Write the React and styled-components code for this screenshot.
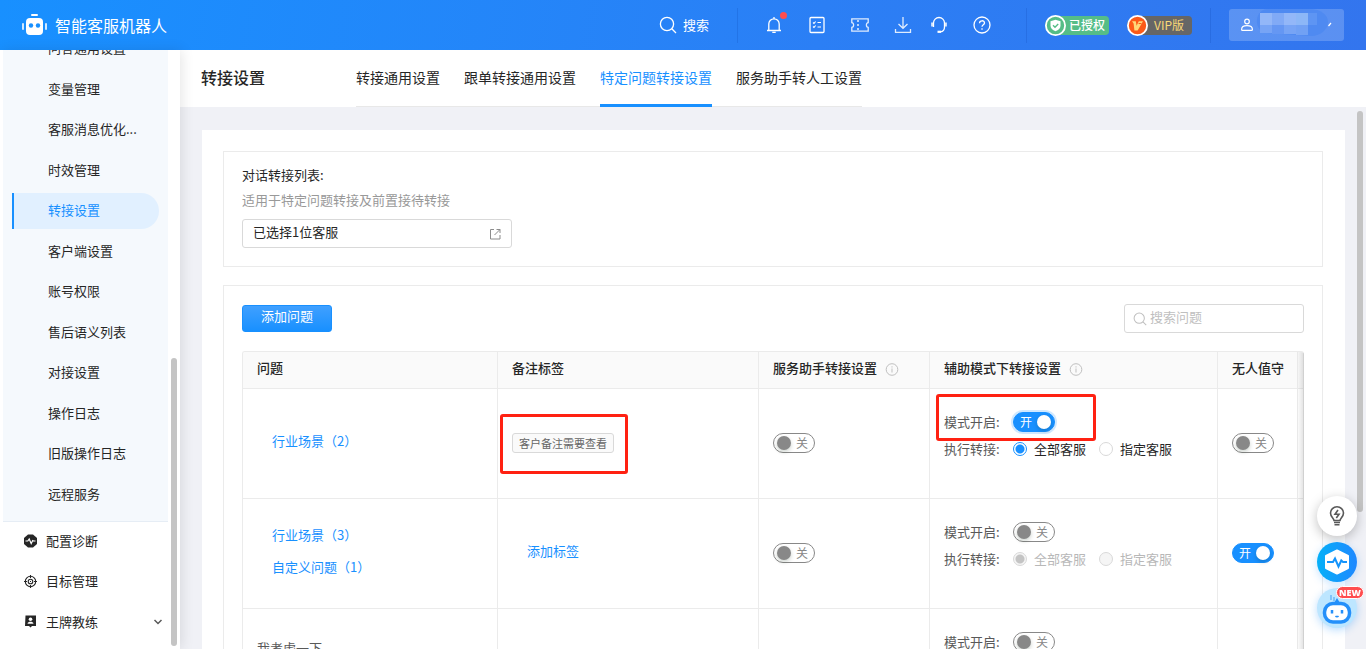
import React, { useState } from 'react';
import styled, { createGlobalStyle, css } from 'styled-components';

const GlobalStyle = createGlobalStyle`
    * {
        box-sizing: border-box;
    }
    body {
        margin: 0;
        font-family: "Noto Sans CJK SC", "Liberation Sans", sans-serif;
        font-size: 13px;
        line-height: 20px;
        color: #262626;
        overflow: hidden;
    }
    button, input {
        font: inherit;
    }
    a {
        color: #1890ff;
        text-decoration: none;
    }
`;

const Page = styled.div`
    display: flex;
    flex-direction: column;
    height: 100vh;
`;

/* Barra superior */
const Header = styled.header`
    display: flex;
    align-items: center;
    flex: none;
    height: 50px;
    padding: 0 22px;
    color: #fff;
    background: linear-gradient(100deg, #1890ff 0%, #2b7ff5 60%, #3375ee 100%);
`;

const Brand = styled.div`
    display: flex;
    align-items: center;
    gap: 8px;
    margin-right: auto;
    font-size: 16px;
`;

const SearchButton = styled.button`
    display: flex;
    align-items: center;
    gap: 6px;
    padding: 0;
    border: 0;
    color: #fff;
    background: none;
    cursor: pointer;
`;

const Divider = styled.span`
    width: 1px;
    height: 35px;
    margin: 0 ${(props) => props.$right}px 0 ${(props) => props.$left}px;
    background: rgba(0, 50, 150, 0.15);
`;

const IconGroup = styled.div`
    display: flex;
    align-items: center;
    gap: ${(props) => (props.$tight ? 18 : 25)}px;
`;

const IconButton = styled.button`
    position: relative;
    display: flex;
    padding: 0;
    border: 0;
    color: #fff;
    background: none;
    cursor: pointer;
`;

const Dot = styled.span`
    position: absolute;
    top: -4px;
    right: -4px;
    width: 7px;
    height: 7px;
    border-radius: 50%;
    background: #ff4d4f;
`;

const Badge = styled.span`
    display: flex;
    align-items: center;
    gap: ${(props) => (props.$vip ? 6 : 3)}px;
    height: 19px;
    margin-right: 18px;
    padding-right: ${(props) => (props.$vip ? 8 : 4)}px;
    border-radius: 10px 4px 4px 10px;
    font-size: 12px;
    font-weight: ${(props) => (props.$vip ? 400 : 500)};
    color: ${(props) => (props.$vip ? '#f9d877' : '#fff')};
    background: ${(props) => (props.$vip ? '#666' : '#55bd87')};
    svg {
        flex: none;
    }
`;

const UserButton = styled.button`
    display: flex;
    align-items: center;
    width: 115px;
    height: 32px;
    padding: 0;
    border: 0;
    border-radius: 3px;
    background: rgba(255, 255, 255, 0.2);
    cursor: pointer;
`;

const Body = styled.div`
    display: flex;
    flex: 1;
    min-height: 0;
`;

/* Menu lateral, rolado até o fim */
const Sidebar = styled.nav`
    position: relative;
    display: flex;
    flex-direction: column;
    justify-content: flex-end;
    flex: none;
    width: 180px;
    padding: 0 12px 6px 3px;
    background: #fff;
    box-shadow: 2px 0 12px rgba(0, 0, 0, 0.1);
    overflow: hidden;
    z-index: 1;
`;

const SubMenu = styled.ul`
    display: grid;
    grid-auto-rows: 1fr;
    align-items: center;
    flex: none;
    height: 493px;
    margin: 0;
    padding: 0 9px 6px;
    list-style: none;
    border-bottom: 1px solid #e6edf5;
    background: #f5f9fd;
`;

const SubLink = styled.a`
    display: block;
    height: 36px;
    padding-left: 34px;
    line-height: 34px;
    color: #262626;
    border-left: 2px solid transparent;
    border-radius: 0 18px 18px 0;
    ${(props) =>
        props.$active &&
        css`
            color: #1890ff;
            border-color: #1890ff;
            background: #e1f0ff;
        `}
`;

const MainMenu = styled.ul`
    display: grid;
    grid-auto-rows: 1fr;
    flex: none;
    height: 121px;
    margin: 0;
    padding: 0;
    list-style: none;
`;

const MainLink = styled.a`
    display: flex;
    align-items: center;
    gap: 9px;
    height: 38px;
    padding: 0 5px 0 21px;
    color: #262626;
    svg:last-child:not(:first-child) {
        margin-left: auto;
        color: #595959;
    }
`;

const ScrollThumb = styled.span`
    position: absolute;
    ${(props) => (props.$bottom ? 'bottom: 3px;' : 'top: 4px;')}
    right: 3px;
    width: 6px;
    height: ${(props) => props.$size}%;
    border-radius: 3px;
    background: #c4c4c4;
`;

/* Área principal */
const Main = styled.main`
    display: flex;
    flex-direction: column;
    flex: 1;
    min-width: 0;
    background: #f0f1f6;
`;

const TitleBar = styled.div`
    display: flex;
    flex: none;
    height: 57px;
    padding-left: 21px;
    background: #fff;
`;

const PageTitle = styled.h1`
    width: 155px;
    margin: 0;
    font-size: 16px;
    font-weight: 500;
    line-height: 54px;
`;

const Tabs = styled.div`
    display: flex;
    gap: 24px;
    border-bottom: 1px solid #e8e8e8;
`;

const Tab = styled.a`
    margin-bottom: -1px;
    font-size: 14px;
    line-height: 54px;
    color: ${(props) => (props.$active ? '#1890ff' : '#262626')};
    border-bottom: 3px solid ${(props) => (props.$active ? '#1890ff' : 'transparent')};
`;

const Scroller = styled.div`
    position: relative;
    flex: 1;
    min-height: 0;
    padding: 23px 21px 0 22px;
    overflow: hidden;
`;

const Card = styled.div`
    display: flex;
    flex-direction: column;
    gap: 18px;
    padding: 21px 22px 21px 21px;
    background: #fff;
`;

const Panel = styled.section`
    padding: ${(props) => (props.$compact ? 13 : 18)}px 18px 18px;
    border: 1px solid #ebebeb;
`;

const Hint = styled.p`
    margin: 5px 0 9px;
    color: #999;
`;

const PickerButton = styled.button`
    display: flex;
    align-items: center;
    justify-content: space-between;
    width: 270px;
    height: 29px;
    padding: 0 10px 4px;
    border: 1px solid #d9d9d9;
    border-radius: 3px;
    color: #262626;
    background: #fff;
    cursor: pointer;
    svg {
        margin-top: 4px;
    }
`;

const Toolbar = styled.div`
    display: flex;
    align-items: center;
    justify-content: space-between;
    margin-bottom: 18px;
`;

const PrimaryButton = styled.button`
    width: 90px;
    height: 27px;
    padding: 0 0 5px;
    border: 1px solid #1890ff;
    border-radius: 3px;
    color: #fff;
    background: linear-gradient(#40a0ff, #1890ff);
    cursor: pointer;
`;

const SearchBox = styled.label`
    display: flex;
    align-items: center;
    gap: 3px;
    width: 180px;
    height: 29px;
    padding: 0 8px;
    border: 1px solid #d9d9d9;
    border-radius: 3px;
    color: #bfbfbf;
    svg {
        flex: none;
    }
`;

const SearchInput = styled.input`
    width: 100%;
    height: 26px;
    padding: 0 0 5px;
    border: 0;
    outline: 0;
    background: none;
    &::placeholder {
        color: #bfbfbf;
    }
`;

/* Tabela de perguntas */
const TableWrap = styled.div`
    position: relative;
    border: solid #ebebeb;
    border-width: 1px 0 0 1px;
    border-radius: 3px 3px 0 0;
    overflow: hidden;
    &::after {
        content: "";
        position: absolute;
        inset: 0 0 0 auto;
        width: 7px;
        background: linear-gradient(90deg, transparent, rgba(0, 0, 0, 0.12));
    }
`;

const Table = styled.table`
    width: 100%;
    table-layout: fixed;
    border-spacing: 0;
`;

const Col = styled.col`
    width: ${(props) => (props.$width ? `${props.$width}px` : 'auto')};
`;

const Th = styled.th`
    height: 37px;
    padding: 0 14px 4px;
    font-weight: 500;
    text-align: left;
    white-space: nowrap;
    border: solid #ebebeb;
    border-width: 0 1px 1px 0;
    background: #fafafa;
    &:last-child {
        padding: 0;
    }
    svg {
        margin: 0 0 -3px 5px;
    }
`;

const Td = styled.td`
    height: 110px;
    padding: 0 14px ${(props) => props.$lift || 2}px;
    border: solid #ebebeb;
    border-width: 0 1px 1px 0;
    &:last-child {
        padding: 0;
    }
`;

const QuestionLinks = styled.div`
    display: flex;
    flex-direction: column;
    gap: 12px;
    padding-left: 15px;
`;

const PlainQuestion = styled.div`
    height: 46px;
    color: #595959;
`;

const Tag = styled.span`
    display: inline-block;
    height: 20px;
    padding: 0 6px;
    font-size: 11px;
    line-height: 18px;
    color: #666;
    border: 1px solid #d9d9d9;
    border-radius: 3px;
    background: #fafafa;
`;

/* Marca vermelha desenhada por cima do conteúdo */
const Marked = styled.div`
    position: relative;
    display: flex;
    width: max-content;
    &::after {
        content: "";
        position: absolute;
        inset: ${(props) => props.$inset};
        border: 3px solid #ff2112;
        border-radius: 3px;
        pointer-events: none;
    }
`;

const ModeRow = styled.div`
    display: flex;
    align-items: center;
    height: 27px;
`;

const ModeLabel = styled.span`
    width: 69px;
    color: #595959;
`;

const RadioLabel = styled.label`
    display: flex;
    align-items: center;
    gap: 7px;
    margin-right: 13px;
    white-space: nowrap;
    color: ${(props) => (props.$disabled ? '#b8b8b8' : '#262626')};
`;

const Radio = styled.input.attrs({ type: 'radio' })`
    appearance: none;
    flex: none;
    width: 14px;
    height: 14px;
    margin: 0;
    border: 1px solid #d9d9d9;
    border-radius: 50%;
    background: #fff;
    &:checked {
        border-color: #1890ff;
        background: radial-gradient(circle, #1890ff 4px, #fff 5px);
    }
    &:disabled {
        border-color: #d9d9d9;
        background: #f5f5f5;
    }
    &:disabled:checked {
        background: radial-gradient(circle, #c4c4c4 4px, #f5f5f5 5px);
    }
`;

const SwitchTrack = styled.label`
    display: inline-flex;
    align-items: center;
    justify-content: space-between;
    flex-direction: ${(props) => (props.$on ? 'row-reverse' : 'row')};
    width: 42px;
    height: 20px;
    padding: ${(props) => (props.$on ? '0 3px 0 6px' : '0 6px 0 3px')};
    border: 1px solid ${(props) => (props.$on ? '#1890ff' : '#888')};
    border-radius: 10px;
    font-size: 12px;
    line-height: 16px;
    vertical-align: middle;
    color: ${(props) => (props.$on ? '#fff' : '#888')};
    background: ${(props) => (props.$on ? '#1890ff' : '#fff')};
    box-shadow: ${(props) => (props.$focused ? '0 0 0 2px rgba(24, 144, 255, 0.2)' : 'none')};
    cursor: pointer;
`;

const SwitchKnob = styled.input.attrs({ type: 'checkbox', role: 'switch' })`
    appearance: none;
    width: 14px;
    height: 14px;
    margin: 0;
    border-radius: 50%;
    background: #888;
    box-shadow: 0 2px 4px rgba(0, 35, 11, 0.2);
    &:checked {
        background: #fff;
    }
`;

/* Botões flutuantes */
const FloatBar = styled.aside`
    position: fixed;
    right: 9px;
    bottom: 21px;
    display: flex;
    flex-direction: column;
    align-items: center;
    gap: 6px;
    z-index: 2;
`;

const FloatButton = styled.button`
    position: relative;
    display: flex;
    align-items: center;
    justify-content: center;
    width: 40px;
    height: 40px;
    padding: 0;
    border: 0;
    border-radius: 50%;
    background: ${(props) => props.$bg};
    box-shadow: ${(props) => props.$shadow};
    cursor: pointer;
`;

const NewBadge = styled.span`
    position: absolute;
    top: -2px;
    right: -7px;
    width: 28px;
    height: 13px;
    border: 1px solid #fff;
    border-radius: 7px;
    font-family: "Open Sans", sans-serif;
    font-size: 9px;
    font-weight: 800;
    line-height: 11px;
    text-align: center;
    color: #fff;
    background: #ff4d4f;
`;

const Icon = ({ size = 18, children, box = 18, width = 1.3 }) => (
    <svg
        width={size}
        height={size}
        viewBox={`0 0 ${box} ${box}`}
        fill="none"
        stroke="currentColor"
        strokeWidth={width}
        aria-hidden="true"
    >
        {children}
    </svg>
);

const LogoIcon = () => (
    <svg width="25" height="22" viewBox="0 0 25 22" fill="#fff" aria-hidden="true">
        <rect x="9" y="0" width="7" height="2" rx="1" />
        <rect x="4" y="4" width="17" height="17" rx="4" />
        <rect x="0" y="9" width="2" height="7" rx="1" opacity="0.8" />
        <rect x="23" y="9" width="2" height="7" rx="1" opacity="0.8" />
        <circle cx="9" cy="11.5" r="2.2" fill="#1890ff" />
        <circle cx="16" cy="11.5" r="2.2" fill="#1890ff" />
    </svg>
);

const SearchIcon = ({ size }) => (
    <Icon size={size}>
        <circle cx="8" cy="8" r="6.6" />
        <path d="M12.8 12.8L17 17" />
    </Icon>
);

const InfoIcon = () => (
    <svg width="20" height="13" viewBox="0 0 20 13" fill="none" stroke="#bfbfbf" aria-hidden="true">
        <circle cx="10" cy="6.5" r="5.8" />
        <path d="M10 5.5v4M10 3.3v1.2" />
    </svg>
);

const ShieldIcon = () => (
    <svg width="21" height="21" viewBox="0 0 21 21" aria-hidden="true">
        <circle cx="10.5" cy="10.5" r="9.6" fill="#55bd87" stroke="#fff" strokeWidth="1.8" />
        <path d="M10.5 4.8l5 1.4v4.6c0 2.5-2 4.2-5 5.4-3-1.2-5-2.9-5-5.4V6.2z" fill="#fff" />
        <path d="M8 10.3l2 1.9 3.2-3.2" fill="none" stroke="#55bd87" strokeWidth="1.4" />
    </svg>
);

const VipIcon = () => (
    <svg width="21" height="21" viewBox="0 0 21 21" aria-hidden="true">
        <circle cx="10.5" cy="10.5" r="9.6" fill="#fd5a18" stroke="#fff" strokeWidth="1.8" />
        <path d="M5 6.2h3.8l.8 4.6 2.2-4.6H16l-5.4 9.3H7.4L6.6 8.600z" fill="#ffd778" />
        <path d="M11.600 8.500h2.800" stroke="#fd5a18" />
    </svg>
);

/* Nome do usuário oculto por um mosaico */
const UserMask = () => (
    <svg width="115" height="32" viewBox="0 0 115 32" fill="none" aria-hidden="true">
        <path d="M38 0h42c12 0 19 6 19 13s-7 14-17 14l-44-3c-13-1-14-22 0-24z" fill="#4f8af1" />
        <path d="M31 4h12v12H31zM55 4h12v12H55z" fill="#93b7f8" />
        <path d="M43 4h12v12H43z" fill="#81aaf6" />
        <path d="M67 4h12v12H67z" fill="#8cb7f7" />
        <path d="M79 4h9v12h-9z" fill="#5e95f3" />
        <path d="M31 16h12v8H31zM55 16h12v9H55z" fill="#77a4f5" />
        <path d="M43 16h12v9H43z" fill="#6597f3" />
        <path d="M67 16h12v10H67z" fill="#71a1f4" />
        <g stroke="#fff" strokeWidth="1.2">
            <circle cx="18" cy="12.5" r="2.3" />
            <path d="M12.6 20.400c0-2.500 2-3.800 5.400-3.800s5.400 1.300 5.400 3.800c0 .6-.3.900-.9.900h-9c-.6 0-.9-.3-.9-.9z" />
            <path d="M99.500 17l2.500-3" />
        </g>
    </svg>
);

const DiagnoseIcon = () => (
    <svg width="13" height="14" viewBox="0 0 13 14" aria-hidden="true">
        <path d="M4 .5h5L13 4v6l-4 3.500H4L0 10V4z" fill="#262626" />
        <path d="M1.500 7h2.300l1.400-2 2 4.500 1.500-3L9.500 7h2" fill="none" stroke="#fff" strokeWidth="1.2" />
    </svg>
);

const TargetIcon = () => (
    <Icon size={13} box={13} width={1.1}>
        <circle cx="6.5" cy="6.5" r="5.2" />
        <circle cx="6.5" cy="6.5" r="2.3" />
        <path d="M6.5 0v3M6.5 10v3M0 6.5h3M10 6.5h3M6 6.5h1" />
    </Icon>
);

const CoachIcon = () => (
    <svg width="13" height="13" viewBox="0 0 13 13" aria-hidden="true">
        <path d="M1.5.5h10.500v10.500H8l-1.500 1.600L5 11H1z" fill="#262626" />
        <circle cx="6.5" cy="4.2" r="1.8" fill="#fff" />
        <path d="M3.500 8.800c.2-1.400 1.500-2 3-2s2.800.6 3 2z" fill="#fff" />
    </svg>
);

const subMenu = [
    '问答通用设置',
    '变量管理',
    '客服消息优化...',
    '时效管理',
    '转接设置',
    '客户端设置',
    '账号权限',
    '售后语义列表',
    '对接设置',
    '操作日志',
    '旧版操作日志',
    '远程服务',
];

const tabs = ['转接通用设置', '跟单转接通用设置', '特定问题转接设置', '服务助手转人工设置'];

const rows = [
    { id: 1, links: ['行业场景（2）'], tag: '客户备注需要查看', mode: true, unattended: false, marked: true },
    { id: 2, links: ['行业场景（3）', '自定义问题（1）'], addTag: true, mode: false, unattended: true },
    { id: 3, text: '我考虑一下', mode: false, unattended: false },
];

const Switch = ({ defaultOn, focused, label }) => {
    const [on, setOn] = useState(defaultOn);
    return (
        <SwitchTrack $on={on} $focused={focused}>
            <SwitchKnob checked={on} onChange={() => setOn(!on)} aria-label={label} />
            <span>{on ? '开' : '关'}</span>
        </SwitchTrack>
    );
};

const ModeSettings = ({ row }) => {
    const modeRow = (
        <ModeRow>
            <ModeLabel>模式开启:</ModeLabel>
            <Switch defaultOn={row.mode} focused={row.marked} label="模式开启" />
        </ModeRow>
    );
    return (
        <>
            {row.marked ? <Marked $inset="-15px -41px -5px -8px">{modeRow}</Marked> : modeRow}
            <ModeRow>
                <ModeLabel>执行转接:</ModeLabel>
                <RadioLabel $disabled={!row.mode}>
                    <Radio name={`target-${row.id}`} defaultChecked disabled={!row.mode} />
                    全部客服
                </RadioLabel>
                <RadioLabel $disabled={!row.mode}>
                    <Radio name={`target-${row.id}`} disabled={!row.mode} />
                    指定客服
                </RadioLabel>
            </ModeRow>
        </>
    );
};

const TopBar = () => (
    <Header>
        <Brand>
            <LogoIcon />
            智能客服机器人
        </Brand>
        <SearchButton>
            <SearchIcon size={18} />
            搜索
        </SearchButton>
        <Divider $left={28} $right={27} />
        <IconGroup>
            <IconButton aria-label="通知">
                <Icon>
                    <path d="M2 14.500h14M3.800 14.300V8a5.200 5.200 0 0 1 10.400 0v6.300M9 1v2M7.300 16.300h3.400" />
                </Icon>
                <Dot />
            </IconButton>
            <IconButton aria-label="任务">
                <Icon>
                    <rect x="2" y="1.5" width="14" height="15" rx="1" />
                    <path d="M5 6.500l1 1 1.600-2M5 10.500l1 1 1.600-2M9.500 6.500H13M9.500 11H13" strokeWidth="1.1" />
                </Icon>
            </IconButton>
            <IconButton aria-label="卡券">
                <Icon>
                    <path d="M.8 2.800h16.400v3.800c-1.200 0-1.800 1-1.800 2.400s.6 2.400 1.800 2.400v3.800H.8v-3.800c1.200 0 1.800-1 1.800-2.400S2 6.600.8 6.600z" opacity="0.85" />
                    <path d="M7 4v10" strokeDasharray="2 2" />
                </Icon>
            </IconButton>
            <IconGroup $tight>
                <IconButton aria-label="下载">
                    <Icon>
                        <path d="M9 1v11M4.500 8L9 12.300 13.500 8M1.500 13v3.300h15V13" opacity="0.85" />
                    </Icon>
                </IconButton>
                <IconButton aria-label="客服">
                    <Icon>
                        <path d="M3.500 11V7a5.500 5.500 0 0 1 11 0v4c0 2.800-1.500 4.500-4 4.800" />
                        <path d="M2.300 6.500v4M15.700 6.500v4" strokeWidth="2.4" opacity="0.8" />
                        <path d="M7.500 15.800h3.500" strokeWidth="2.2" />
                    </Icon>
                </IconButton>
            </IconGroup>
            <IconButton aria-label="帮助">
                <Icon>
                    <circle cx="9" cy="9" r="8" />
                    <path d="M6.500 7.200C6.500 4 11.500 4 11.500 7c0 1.700-2.500 1.900-2.500 3.800M9 12.200v1.500" />
                </Icon>
            </IconButton>
        </IconGroup>
        <Divider $left={35} $right={18} />
        <Badge>
            <ShieldIcon />
            已授权
        </Badge>
        <Badge $vip>
            <VipIcon />
            VIP版
        </Badge>
        <Divider $left={0} $right={18} />
        <UserButton aria-label="账号">
            <UserMask />
        </UserButton>
    </Header>
);

const SideMenu = () => (
    <Sidebar>
        <SubMenu>
            {subMenu.map((item) => (
                <li key={item}>
                    <SubLink href="#" $active={item === '转接设置'}>
                        {item}
                    </SubLink>
                </li>
            ))}
        </SubMenu>
        <MainMenu>
            <li>
                <MainLink href="#">
                    <DiagnoseIcon />
                    配置诊断
                </MainLink>
            </li>
            <li>
                <MainLink href="#">
                    <TargetIcon />
                    目标管理
                </MainLink>
            </li>
            <li>
                <MainLink href="#">
                    <CoachIcon />
                    王牌教练
                    <Icon size={10} box={10} width={1.5}>
                        <path d="M1.500 3L5 6.500 8.500 3" />
                    </Icon>
                </MainLink>
            </li>
        </MainMenu>
        <ScrollThumb $bottom $size={48} />
    </Sidebar>
);

const QuestionTable = () => (
    <TableWrap>
        <Table>
            <colgroup>
                <Col />
                <Col $width={261} />
                <Col $width={171} />
                <Col $width={288} />
                <Col $width={80} />
                <Col $width={6} />
            </colgroup>
            <thead>
                <tr>
                    <Th>问题</Th>
                    <Th>备注标签</Th>
                    <Th>
                        服务助手转接设置
                        <InfoIcon />
                    </Th>
                    <Th>
                        辅助模式下转接设置
                        <InfoIcon />
                    </Th>
                    <Th>无人值守</Th>
                    <Th />
                </tr>
            </thead>
            <tbody>
                {rows.map((row) => (
                    <tr key={row.id}>
                        <Td $lift={6}>
                            {row.text && <PlainQuestion>{row.text}</PlainQuestion>}
                            {row.links && (
                                <QuestionLinks>
                                    {row.links.map((link) => (
                                        <a href="#" key={link}>
                                            {link}
                                        </a>
                                    ))}
                                </QuestionLinks>
                            )}
                        </Td>
                        <Td $lift={row.addTag ? 6 : 2}>
                            {row.tag && (
                                <Marked $inset="-19px -14px -21px -12px">
                                    <Tag>{row.tag}</Tag>
                                </Marked>
                            )}
                            {row.addTag && (
                                <QuestionLinks>
                                    <a href="#">添加标签</a>
                                </QuestionLinks>
                            )}
                        </Td>
                        <Td>
                            <Switch defaultOn={false} label="服务助手转接设置" />
                        </Td>
                        <Td $lift={16}>
                            <ModeSettings row={row} />
                        </Td>
                        <Td>
                            <Switch defaultOn={row.unattended} label="无人值守" />
                        </Td>
                        <Td />
                    </tr>
                ))}
            </tbody>
        </Table>
    </TableWrap>
);

const FloatTools = () => (
    <FloatBar>
        <FloatButton $bg="#fff" $shadow="0 3px 12px rgba(0, 0, 0, 0.25)" aria-label="提示">
            <svg width="16" height="20" viewBox="0 0 16 20" fill="none" stroke="#595959" strokeWidth="1.6" aria-hidden="true">
                <path d="M5 14.500c0-2-3.500-3.500-3.500-7.500a6.500 6.200 0 0 1 13 0c0 4-3.500 5.500-3.500 7.500zM5 16.500h6M5.500 18.700h5" />
                <path d="M9 4L6 8.300h4L7.300 12" />
            </svg>
        </FloatButton>
        <FloatButton $bg="linear-gradient(90deg, #05b0f8, #1e88ff)" $shadow="0 2px 8px rgba(24, 144, 255, 0.25)" aria-label="诊断">
            <svg width="26" height="26" viewBox="0 0 26 26" aria-hidden="true">
                <path d="M13 1.500L24 7v12l-11 5.500L2 19V7z" fill="#fff" stroke="#fff" strokeWidth="2" strokeLinejoin="round" />
                <path d="M3 13h6l2-3.500 3.500 8 2.800-6L19 13h4" fill="none" stroke="#1594fb" strokeWidth="2" />
            </svg>
        </FloatButton>
        <FloatButton $bg="#bde6ff" $shadow="0 2px 8px rgba(24, 144, 255, 0.3)" aria-label="助手">
            <svg width="30" height="32" viewBox="0 0 30 32" aria-hidden="true">
                <path d="M9 3v5M12 5v4" stroke="#6bb8f8" strokeWidth="1.5" />
                <path d="M15 6l3 5h-6z" fill="#2490fa" />
                <rect x="2.5" y="11.500" width="25" height="18.500" rx="8.500" fill="#fff" stroke="#2490fa" strokeWidth="3.500" />
                <path d="M10 18v3.500M20 18v3.500" stroke="#2490fa" strokeWidth="2.500" />
                <path d="M13.500 24c.8 1 2.200 1 3 0" fill="none" stroke="#2490fa" strokeWidth="1.5" />
            </svg>
            <NewBadge>NEW</NewBadge>
        </FloatButton>
    </FloatBar>
);

const App = () => {
    return (
        <Page>
            <GlobalStyle />
            <TopBar />
            <Body>
                <SideMenu />
                <Main>
                    <TitleBar>
                        <PageTitle>转接设置</PageTitle>
                        <Tabs>
                            {tabs.map((tab) => (
                                <Tab href="#" key={tab} $active={tab === '特定问题转接设置'}>
                                    {tab}
                                </Tab>
                            ))}
                        </Tabs>
                    </TitleBar>
                    <Scroller>
                        <Card>
                            <Panel $compact>
                                <div>对话转接列表:</div>
                                <Hint>适用于特定问题转接及前置接待转接</Hint>
                                <PickerButton>
                                    已选择1位客服
                                    <svg width="12" height="12" viewBox="0 0 12 12" fill="none" stroke="#8c8c8c" aria-hidden="true">
                                        <path d="M5 1.500H1.500v9.500H11V7M7.500 1.500H11V5M11 1.500L5.500 7" />
                                    </svg>
                                </PickerButton>
                            </Panel>
                            <Panel>
                                <Toolbar>
                                    <PrimaryButton>添加问题</PrimaryButton>
                                    <SearchBox>
                                        <SearchIcon size={14} />
                                        <SearchInput placeholder="搜索问题" aria-label="搜索问题" />
                                    </SearchBox>
                                </Toolbar>
                                <QuestionTable />
                            </Panel>
                        </Card>
                        <ScrollThumb $size={74} />
                    </Scroller>
                </Main>
            </Body>
            <FloatTools />
        </Page>
    );
};

export default App;
